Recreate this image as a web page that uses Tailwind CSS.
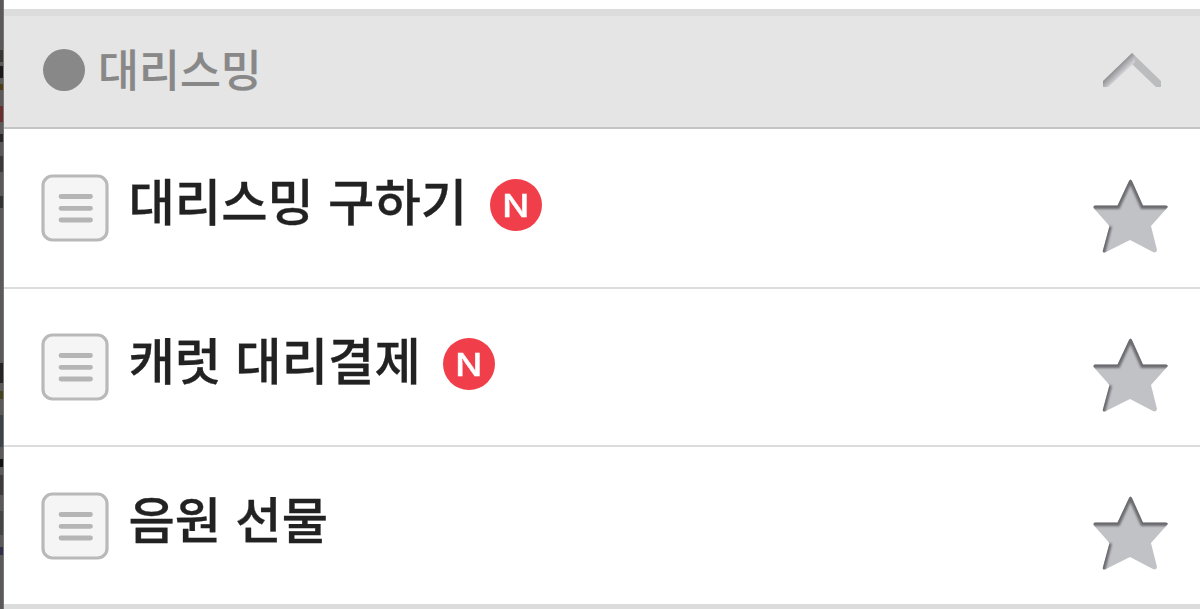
<!DOCTYPE html>
<html lang="ko">
<head>
    <meta charset="UTF-8">
    <meta name="viewport" content="width=device-width, initial-scale=1.0">
    <title>대리스밍</title>
    <script src="https://cdn.jsdelivr.net/npm/@tailwindcss/browser@4"></script>
</head>
<body class="flex h-[609px] overflow-hidden bg-white font-['Noto_Sans_CJK_KR',sans-serif]">

<!-- Shared icons -->
<svg class="absolute size-0" xmlns="http://www.w3.org/2000/svg">
    <defs>
        <clipPath id="star-clip">
            <path d="M38 4 Q39.500 1 41 4 L52 28.500 H75 Q78 29 76 31 L60 49 L66 73 Q65.500 76.500 62 75 L39 63 L14 75.500 Q11 76 12 73 L18.500 49 L3 31.500 Q1.500 29 4 28.500 H26.500 Z"></path>
        </clipPath>
        <filter id="soft" x="-20%" y="-20%" width="140%" height="140%">
            <feGaussianBlur stdDeviation="1.3"></feGaussianBlur>
        </filter>
    </defs>
    <symbol id="icon-list" viewBox="0 0 68 68">
        <rect x="2" y="2" width="64" height="64" rx="9.500" fill="#f5f5f5" stroke="#b9b9b9" stroke-width="3.200"></rect>
        <path d="M20 22.500H49.500M20 34.300H49.500M20 46H49.500" stroke="#b5b5b5" stroke-width="4.800" stroke-linecap="round"></path>
    </symbol>
    <symbol id="icon-star" viewBox="0 0 80 80">
        <g clip-path="url(#star-clip)">
            <rect width="80" height="80" fill="#c1c2c6"></rect>
            <path d="M11 77 L18 49M1 29 H26.500 L39.500 1 M39.500 1L52 29 H78" fill="none" stroke="#6c6c6f" stroke-width="6" filter="url(#soft)"></path>
        </g>
    </symbol>
</svg>

<!-- Dimmed page behind the drawer -->
<div class="flex w-1 shrink-0 flex-col border-r border-[#777] bg-[#5c5a58]">
    <div class="mt-[50px] h-3 bg-[#383532]"></div>
    <div class="mt-1 h-3 bg-[#1c1a19]"></div>
    <div class="mt-1.5 h-1.5 bg-[#4d3d14]"></div>
    <div class="mt-4 h-4 bg-[#6c2d30]"></div>
    <div class="mt-3 h-2 bg-[#292827]"></div>
    <div class="mt-3.5 h-4 bg-[#3b3a39]"></div>
    <div class="mt-6 h-3 bg-[#333]"></div>
    <div class="mt-[155px] h-5 bg-[#262524]"></div>
    <div class="mt-2 h-2 bg-[#45431e]"></div>
    <div class="mt-4 h-8 bg-[#3c414b]"></div>
    <div class="mt-3 h-2 bg-[#111]"></div>
    <div class="mt-2 h-5 bg-[#3e3c3b]"></div>
    <div class="mt-4 h-6 bg-[#444]"></div>
    <div class="mt-3 h-2 bg-[#30304b]"></div>
</div>

<div class="flex min-w-0 grow flex-col">
    <!-- Category -->
    <div class="mt-[9px] flex h-[120px] shrink-0 items-center justify-between border-t-7 border-b-2 border-t-[#dcdcdc] border-b-[#c4c4c4] bg-[#e5e5e5] pr-[37px] pb-[3px] pl-[39px]">
        <div class="flex items-center">
            <span class="size-[42px] rounded-full bg-[#888]"></span>
            <span class="-mt-1 ml-[13px] text-[44.5px] leading-[60px] font-medium text-[#888] [-webkit-text-stroke:0.2px_#888]">대리스밍</span>
        </div>
        <svg class="h-9 w-[62px]" viewBox="0 0 62 36" fill="none">
            <defs>
                <linearGradient id="chevron-left" x1="14" y1="17" x2="20" y2="23" gradientUnits="userSpaceOnUse">
                    <stop offset="0" stop-color="#8e8e91"></stop>
                    <stop offset="1" stop-color="#d2d2d6"></stop>
                </linearGradient>
            </defs>
            <path d="M31 1 L60 29 V35 H55 L31 12 Z" fill="#bbbcbe"></path>
            <path d="M31 1 L2 29 V35 H7 L31 13 L34 10 V4 Z" fill="url(#chevron-left)"></path>
        </svg>
    </div>

    <!-- Boards -->
    <div class="flex h-40 shrink-0 items-start border-b-2 border-[#dcdcdc] pt-[45px] pr-[29px] pl-[36.5px]">
        <svg class="size-[68px]"><use href="#icon-list"></use></svg>
        <span class="-mt-[6px] ml-[20px] text-[50.4px] leading-[64px] font-medium text-[#222] [-webkit-text-stroke:0.3px_#222]">대리스밍 구하기</span>
        <span class="mt-[5px] ml-[22.5px] flex size-[52px] items-center justify-center rounded-full bg-[#f03e4a]">
            <span class="scale-x-115 font-[Inter,sans-serif] text-[31px] leading-none font-medium text-white [-webkit-text-stroke:0.4px_white]">N</span>
        </span>
        <svg class="mt-[3px] ml-auto size-20"><use href="#icon-star"></use></svg>
    </div>
    <div class="flex h-[158px] shrink-0 items-start border-b-2 border-[#dcdcdc] pt-11 pr-[29px] pl-[36.5px]">
        <svg class="size-[68px]"><use href="#icon-list"></use></svg>
        <span class="-mt-[6px] ml-[20px] text-[50.4px] leading-[64px] font-medium text-[#222] [-webkit-text-stroke:0.3px_#222]">캐럿 대리결제</span>
        <span class="mt-[5px] ml-[22px] flex size-[52px] items-center justify-center rounded-full bg-[#f03e4a]">
            <span class="scale-x-115 font-[Inter,sans-serif] text-[31px] leading-none font-medium text-white [-webkit-text-stroke:0.4px_white]">N</span>
        </span>
        <svg class="mt-[3px] ml-auto size-20"><use href="#icon-star"></use></svg>
    </div>
    <div class="flex h-[157px] shrink-0 items-start pt-[45px] pr-[29px] pl-[36.5px]">
        <svg class="size-[68px]"><use href="#icon-list"></use></svg>
        <span class="-mt-[6px] ml-[20px] text-[50.4px] leading-[64px] font-medium text-[#222] [-webkit-text-stroke:0.3px_#222]">음원 선물</span>
        <svg class="mt-[2px] ml-auto size-20"><use href="#icon-star"></use></svg>
    </div>
    <div class="grow bg-[#dcdcdc]"></div>
</div>

</body>
</html>
